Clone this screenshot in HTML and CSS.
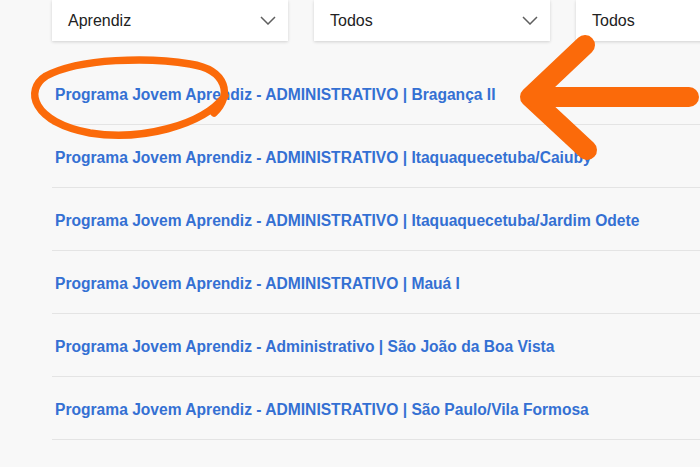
FILE: index.html
```html
<!DOCTYPE html>
<html lang="pt-BR">
<head>
<meta charset="utf-8">
<title>Vagas</title>
<link rel="stylesheet" href="styles.css">
</head>
<body>
<div class="page">
  <div class="filters">
    <div class="select"><span>Aprendiz</span><svg class="chev" width="16" height="9" viewBox="0 0 16 9"><polyline points="1,1 8,8 15,1" fill="none" stroke="#5f5f5f" stroke-width="1.5"/></svg></div>
    <div class="select"><span>Todos</span><svg class="chev" width="16" height="9" viewBox="0 0 16 9"><polyline points="1,1 8,8 15,1" fill="none" stroke="#5f5f5f" stroke-width="1.5"/></svg></div>
    <div class="select"><span>Todos</span><svg class="chev" width="16" height="9" viewBox="0 0 16 9"><polyline points="1,1 8,8 15,1" fill="none" stroke="#5f5f5f" stroke-width="1.5"/></svg></div>
  </div>
  <ul class="jobs">
    <li class="job"><a href="#">Programa Jovem Aprendiz - ADMINISTRATIVO | Bragança II</a></li>
    <li class="job"><a href="#">Programa Jovem Aprendiz - ADMINISTRATIVO | Itaquaquecetuba/Caiuby</a></li>
    <li class="job"><a href="#">Programa Jovem Aprendiz - ADMINISTRATIVO | Itaquaquecetuba/Jardim Odete</a></li>
    <li class="job"><a href="#">Programa Jovem Aprendiz - ADMINISTRATIVO | Mauá I</a></li>
    <li class="job"><a href="#">Programa Jovem Aprendiz - Administrativo | São João da Boa Vista</a></li>
    <li class="job"><a href="#">Programa Jovem Aprendiz - ADMINISTRATIVO | São Paulo/Vila Formosa</a></li>
  </ul>
  <svg class="marks" width="700" height="467" viewBox="0 0 700 467">
    <path d="M 214 113 C 232 96, 228 70, 190 64 C 150 57, 80 58, 46 76 C 24 90, 32 122, 90 133 C 140 141, 202 126, 225 96" fill="none" stroke="#fb6a0a" stroke-width="7.5" stroke-linecap="round"/>
    <g fill="none" stroke="#fb6a0a" stroke-width="20" stroke-linecap="round" stroke-linejoin="round">
      <polyline points="585,45 530,97 587,150"/>
      <line x1="532" y1="97" x2="689" y2="97"/>
    </g>
  </svg>
</div>
</body>
</html>
```
FILE: styles.css
```css
html, body {
  margin: 0;
  padding: 0;
  background: #f8f8f8;
}
.page {
  position: relative;
  width: 700px;
  height: 467px;
  overflow: hidden;
  font-family: "Liberation Sans", Arial, sans-serif;
}
.filters {
  display: flex;
  gap: 26px;
  padding-left: 52px;
  width: 1000px;
}
.select {
  flex: 0 0 236px;
  height: 41px;
  box-sizing: border-box;
  background: #fff;
  box-shadow: 0 1px 3px rgba(0, 0, 0, 0.16);
  display: flex;
  align-items: center;
  justify-content: space-between;
  padding: 0 12px 0 16px;
  font-size: 16px;
  color: #222;
}
.chev {
  display: block;
}
.jobs {
  list-style: none;
  margin: 21px 0 0 52px;
  padding: 0;
}
.job {
  height: 58px;
  border-bottom: 1px solid #e4e4e4;
  display: flex;
  align-items: center;
  padding: 4px 0 0 3px;
}
.job a {
  font-size: 15.6px;
  font-weight: bold;
  color: #3470d3;
  text-decoration: none;
}
.marks {
  position: absolute;
  left: 0;
  top: 0;
  pointer-events: none;
}
```
